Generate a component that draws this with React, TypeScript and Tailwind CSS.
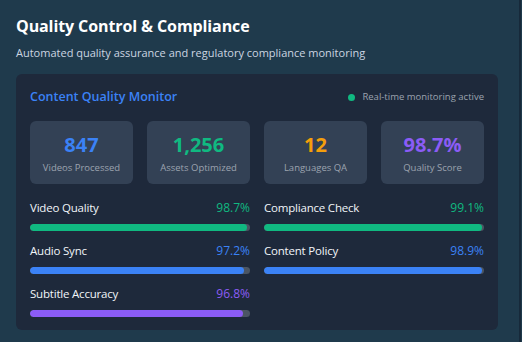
import React from "react";

const stats = [
  { value: "847", label: "Videos Processed", color: "text-[#3b82f6]" },
  { value: "1,256", label: "Assets Optimized", color: "text-[#10b981]" },
  { value: "12", label: "Languages QA", color: "text-[#f59e0b]" },
  { value: "98.7%", label: "Quality Score", color: "text-[#8b5cf6]" },
];

const bars = [
  { label: "Video Quality", value: 98.7, text: "text-[#10b981]", bar: "bg-[#10b981]" },
  { label: "Compliance Check", value: 99.1, text: "text-[#10b981]", bar: "bg-[#10b981]" },
  { label: "Audio Sync", value: 97.2, text: "text-[#3b82f6]", bar: "bg-[#3b82f6]" },
  { label: "Content Policy", value: 98.9, text: "text-[#3b82f6]", bar: "bg-[#3b82f6]" },
  { label: "Subtitle Accuracy", value: 96.8, text: "text-[#8b5cf6]", bar: "bg-[#8b5cf6]" },
];

export default function App() {
  return (
    <div
      className="w-[522px] h-[342px] bg-[#1f3a4c] flex overflow-hidden"
      style={{ fontFamily: '"Open Sans", "Noto Sans", sans-serif' }}
    >
      <div className="flex-1 pl-4 pr-[21px] pt-[14px]">
        <h1 className="text-[16px] leading-[24px] font-bold text-white tracking-[-0.1px]">
          Quality Control &amp; Compliance
        </h1>
        <p className="mt-[7px] text-[11px] leading-[16px] text-[#cbd5e1]">
          Automated quality assurance and regulatory compliance monitoring
        </p>
        <div className="mt-[13px] bg-[#1e293b] rounded-[6px] px-[14px] pt-[13px] pb-[13px]">
          <div className="flex items-center justify-between h-[20px]">
            <span className="text-[12.5px] font-semibold text-[#3b82f6]">Content Quality Monitor</span>
            <span className="flex items-center gap-[7px] text-[9.5px] text-[#9ca3af]">
              <span className="w-[7px] h-[7px] rounded-full bg-[#10b981]" />
              Real-time monitoring active
            </span>
          </div>
          <div className="mt-[14px] grid grid-cols-4 gap-[14px]">
            {stats.map((s) => (
              <div
                key={s.label}
                className="h-[63px] bg-[#334155] rounded-[6px] flex flex-col items-center justify-center"
              >
                <span className={`text-[20px] leading-[26px] font-bold ${s.color}`}>{s.value}</span>
                <span className="mt-[3px] text-[9.5px] leading-[13px] text-[#9ca3af]">{s.label}</span>
              </div>
            ))}
          </div>
          <div className="mt-[15px] grid grid-cols-2 gap-x-[14px] gap-y-[11px]">
            {bars.map((b) => (
              <div key={b.label}>
                <div className="flex items-center justify-between h-[18px]">
                  <span className="text-[11.5px] font-medium text-[#f1f5f9] tracking-[-0.2px]">{b.label}</span>
                  <span className={`text-[12px] ${b.text}`}>{b.value}%</span>
                </div>
                <div className="mt-[7px] h-[7px] rounded-full bg-[#4b5563] overflow-hidden">
                  <div className={`h-full rounded-full ${b.bar}`} style={{ width: `${b.value}%` }} />
                </div>
              </div>
            ))}
          </div>
        </div>
      </div>
      <div className="w-[2px] bg-[#17293a]" />
      <div className="w-[1px]" />
    </div>
  );
}
